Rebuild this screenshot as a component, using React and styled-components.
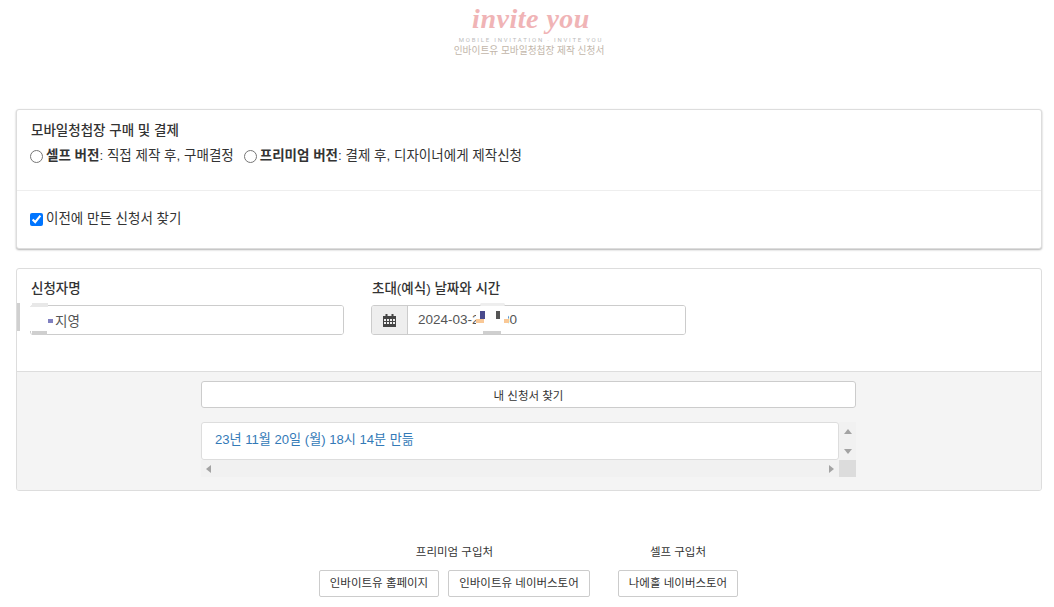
import React from "react";
import styled, { createGlobalStyle } from "styled-components";

const Global = createGlobalStyle`
  html, body {
    margin: 0;
    padding: 0;
    background: #fff;
  }
  body {
    font-family: "Liberation Sans", "Noto Sans CJK KR", sans-serif;
    font-size: 14px;
    line-height: 20px;
    color: #333;
    overflow: hidden;
  }
`;

const Page = styled.div`
  width: 1054px;
  height: 607px;
  overflow: hidden;
  padding: 0 12px 0 16px;
  box-sizing: border-box;
`;

const Header = styled.header`
  height: 109px;
  width: 1026px;
  display: flex;
  flex-direction: column;
  align-items: center;
`;

const LogoText = styled.div`
  height: 36px;
  font-family: "Liberation Serif", serif;
  font-style: italic;
  font-weight: 700;
  font-size: 28px;
  line-height: 38px;
  letter-spacing: 0.5px;
  color: #f0b4b6;
  margin-left: 4px;
`;

const LogoSub = styled.div`
  height: 8px;
  font-family: Roboto, sans-serif;
  font-size: 6px;
  line-height: 8px;
  letter-spacing: 1.8px;
  color: #bcbcbc;
  margin-left: 4px;
  white-space: nowrap;
`;

const HeaderCaption = styled.div`
  font-size: 9.7px;
  line-height: 14px;
  color: #c2b6aa;
`;

const Card = styled.section`
  width: 1026px;
  box-sizing: border-box;
  background: #fff;
  border: 1px solid #ddd;
  border-radius: 3px;
  box-shadow: ${(p) => (p.$raised ? "0 1px 2px rgba(0, 0, 0, 0.3)" : "none")};
  margin-bottom: ${(p) => p.$gap || 0}px;
  overflow: hidden;
`;

const BuySection = styled.div`
  height: 81px;
  box-sizing: border-box;
  padding: 11px 13px 0;
  border-bottom: 1px solid #eee;
`;

const FindSection = styled.div`
  height: 57px;
  box-sizing: border-box;
  padding: 18px 13px 0;
`;

const Title = styled.div`
  font-size: 13.5px;
  font-weight: 500;
  line-height: 20px;
  color: #333;
  padding-left: 1px;
`;

const OptionRow = styled.div`
  display: flex;
  align-items: center;
  gap: 10px;
  margin-top: 5px;
  height: 20px;
`;

const Option = styled.label`
  display: flex;
  align-items: center;
  gap: 3px;
  font-size: 13.5px;
  color: #333;

  b {
    font-weight: 700;
  }

  input {
    margin: 0;
    width: 13px;
    height: 13px;
  }
`;

const FieldSection = styled.div`
  height: 103px;
  box-sizing: border-box;
  padding: 10px 13px 0;
  display: flex;
  gap: 27px;
  border-bottom: 1px solid #ddd;
`;

const Field = styled.div`
  width: ${(p) => p.$width}px;
  position: relative;
`;

const FieldLabel = styled.div`
  font-size: 13.5px;
  font-weight: 500;
  line-height: 20px;
  margin-bottom: 6px;
  padding-left: 1px;
`;

const InputGroup = styled.div`
  display: flex;
  height: 30px;
  box-sizing: border-box;
  border: 1px solid #ccc;
  border-radius: 3px;
  overflow: hidden;
`;

const Addon = styled.span`
  width: 35px;
  flex: none;
  display: flex;
  align-items: center;
  justify-content: center;
  background: #eee;
  border-right: 1px solid #ccc;
`;

const TextInput = styled.input`
  flex: 1;
  min-width: 0;
  border: 0;
  outline: 0;
  padding: 0 ${(p) => p.$pad || 10}px 1px;
  font-family: inherit;
  font-size: 13.5px;
  color: #555;
  background: #fff;
`;

const Mask = styled.span`
  position: absolute;
  left: ${(p) => p.$x}px;
  top: ${(p) => p.$y}px;
  width: ${(p) => p.$w}px;
  height: ${(p) => p.$h}px;
  background: ${(p) => p.$color};
  border-radius: ${(p) => p.$round || 0}px;
`;

const SearchPanel = styled.div`
  height: 118px;
  box-sizing: border-box;
  background: #f4f4f4;
  padding: 9px 184px 0;
`;

const SearchButton = styled.button`
  display: block;
  width: 655px;
  height: 27px;
  padding: 0;
  box-sizing: border-box;
  background: #fff;
  border: 1px solid #ccc;
  border-radius: 3px;
  font-family: inherit;
  font-size: 11.5px;
  color: #333;
`;

const ResultBox = styled.div`
  margin-top: 14px;
  width: 655px;
  height: 55px;
  display: grid;
  grid-template-columns: 638px 17px;
  grid-template-rows: 38px 17px;
`;

const ResultItem = styled.a`
  box-sizing: border-box;
  padding: 0 13px 2px;
  display: flex;
  align-items: center;
  height: 38px;
  background: #fff;
  border: 1px solid #ddd;
  border-radius: 3px;
  font-size: 13.1px;
  color: #337ab7;
  text-decoration: none;
`;

const VScroll = styled.div`
  background: #f1f1f1;
  display: flex;
  flex-direction: column;
  align-items: center;
  justify-content: space-between;
  padding: 7px 0 6px;
  box-sizing: border-box;
`;

const HScroll = styled.div`
  background: #f1f1f1;
  display: flex;
  align-items: center;
  justify-content: space-between;
  padding: 0 5px;
`;

const Corner = styled.div`
  background: #dcdcdc;
`;

const Arrow = styled.svg`
  display: block;
  fill: #a3a3a3;
`;

const StoreRow = styled.div`
  display: flex;
  margin-top: 51px;
  margin-left: 303px;
  gap: 28px;
`;

const StoreGroup = styled.div`
  display: flex;
  flex-direction: column;
  align-items: center;
`;

const StoreTitle = styled.div`
  font-size: 11.5px;
  line-height: 20px;
  color: #333;
  margin-bottom: 8px;
`;

const StoreButtons = styled.div`
  display: flex;
  gap: 9px;
`;

const StoreButton = styled.a`
  display: block;
  box-sizing: border-box;
  width: ${(p) => p.$width}px;
  height: 27px;
  line-height: 25px;
  text-align: center;
  background: #fff;
  border: 1px solid #ccc;
  border-radius: 2px;
  font-size: 11.5px;
  color: #333;
  white-space: nowrap;
`;

const CalendarIcon = () => (
  <svg width="13" height="13" viewBox="0 0 13 13" fill="#444">
    <rect x="2.5" y="0" width="2" height="3" />
    <rect x="8.5" y="0" width="2" height="3" />
    <path d="M0 2h13v11H0zM1 5v2h2V5zm3 0v2h2V5zm3 0v2h2V5zm3 0v2h2V5zM1 8v2h2V8zm3 0v2h2V8zm3 0v2h2V8zm3 0v2h2V8z" fillRule="evenodd" />
  </svg>
);

export default function App() {
  return (
    <Page>
      <Global />
      <Header>
        <LogoText>invite you</LogoText>
        <LogoSub>MOBILE INVITATION · INVITE YOU</LogoSub>
        <HeaderCaption>인바이트유 모바일청첩장 제작 신청서</HeaderCaption>
      </Header>

      <Card $raised $gap={19}>
        <BuySection>
          <Title>모바일청첩장 구매 및 결제</Title>
          <OptionRow>
            <Option>
              <input type="radio" name="version" />
              <span><b>셀프 버전</b>: 직접 제작 후, 구매결정</span>
            </Option>
            <Option>
              <input type="radio" name="version" />
              <span><b>프리미엄 버전</b>: 결제 후, 디자이너에게 제작신청</span>
            </Option>
          </OptionRow>
        </BuySection>
        <FindSection>
          <Option>
            <input type="checkbox" defaultChecked />
            <span>이전에 만든 신청서 찾기</span>
          </Option>
        </FindSection>
      </Card>

      <Card>
        <FieldSection>
          <Field $width={314}>
            <FieldLabel>신청자명</FieldLabel>
            <InputGroup>
              <TextInput $pad={24} defaultValue="지영" />
            </InputGroup>
            <Mask $x={-14} $y={24} $w={4} $h={28} $color="#d0d0d0" />
            <Mask $x={2} $y={24} $w={16} $h={4} $color="#e8e8e8" />
            <Mask $x={2} $y={52} $w={15} $h={4} $color="#cfcfcf" />
            <Mask $x={0} $y={28} $w={18} $h={24} $color="#fff" />
            <Mask $x={18} $y={40} $w={5} $h={4} $color="#8080c0" />
          </Field>
          <Field $width={315}>
            <FieldLabel>초대(예식) 날짜와 시간</FieldLabel>
            <InputGroup>
              <Addon><CalendarIcon /></Addon>
              <TextInput defaultValue="2024-03-23 2:30" />
            </InputGroup>
            <Mask $x={109} $y={24} $w={25} $h={3} $color="#eeeeee" $round={2} />
            <Mask $x={105} $y={27} $w={32} $h={26} $color="#fff" $round={6} />
            <Mask $x={112} $y={52} $w={18} $h={3} $color="#cfcfcf" />
            <Mask $x={109} $y={32} $w={5} $h={8} $color="#4a4a8c" />
            <Mask $x={125} $y={32} $w={4} $h={8} $color="#555" />
            <Mask $x={105} $y={40} $w={8} $h={4} $color="#f9c896" />
            <Mask $x={133} $y={40} $w={5} $h={4} $color="#f9c896" />
          </Field>
        </FieldSection>
        <SearchPanel>
          <SearchButton>내 신청서 찾기</SearchButton>
          <ResultBox>
            <ResultItem>23년 11월 20일 (월) 18시 14분 만듦</ResultItem>
            <VScroll>
              <Arrow width="8" height="5" viewBox="0 0 8 5"><path d="M4 0l4 5H0z" /></Arrow>
              <Arrow width="8" height="5" viewBox="0 0 8 5"><path d="M0 0h8L4 5z" /></Arrow>
            </VScroll>
            <HScroll>
              <Arrow width="5" height="8" viewBox="0 0 5 8"><path d="M5 0v8L0 4z" /></Arrow>
              <Arrow width="5" height="8" viewBox="0 0 5 8"><path d="M0 0l5 4-5 4z" /></Arrow>
            </HScroll>
            <Corner />
          </ResultBox>
        </SearchPanel>
      </Card>

      <StoreRow>
        <StoreGroup>
          <StoreTitle>프리미엄 구입처</StoreTitle>
          <StoreButtons>
            <StoreButton $width={120}>인바이트유 홈페이지</StoreButton>
            <StoreButton $width={142}>인바이트유 네이버스토어</StoreButton>
          </StoreButtons>
        </StoreGroup>
        <StoreGroup>
          <StoreTitle>셀프 구입처</StoreTitle>
          <StoreButtons>
            <StoreButton $width={120}>나에홀 네이버스토어</StoreButton>
          </StoreButtons>
        </StoreGroup>
      </StoreRow>
    </Page>
  );
}
